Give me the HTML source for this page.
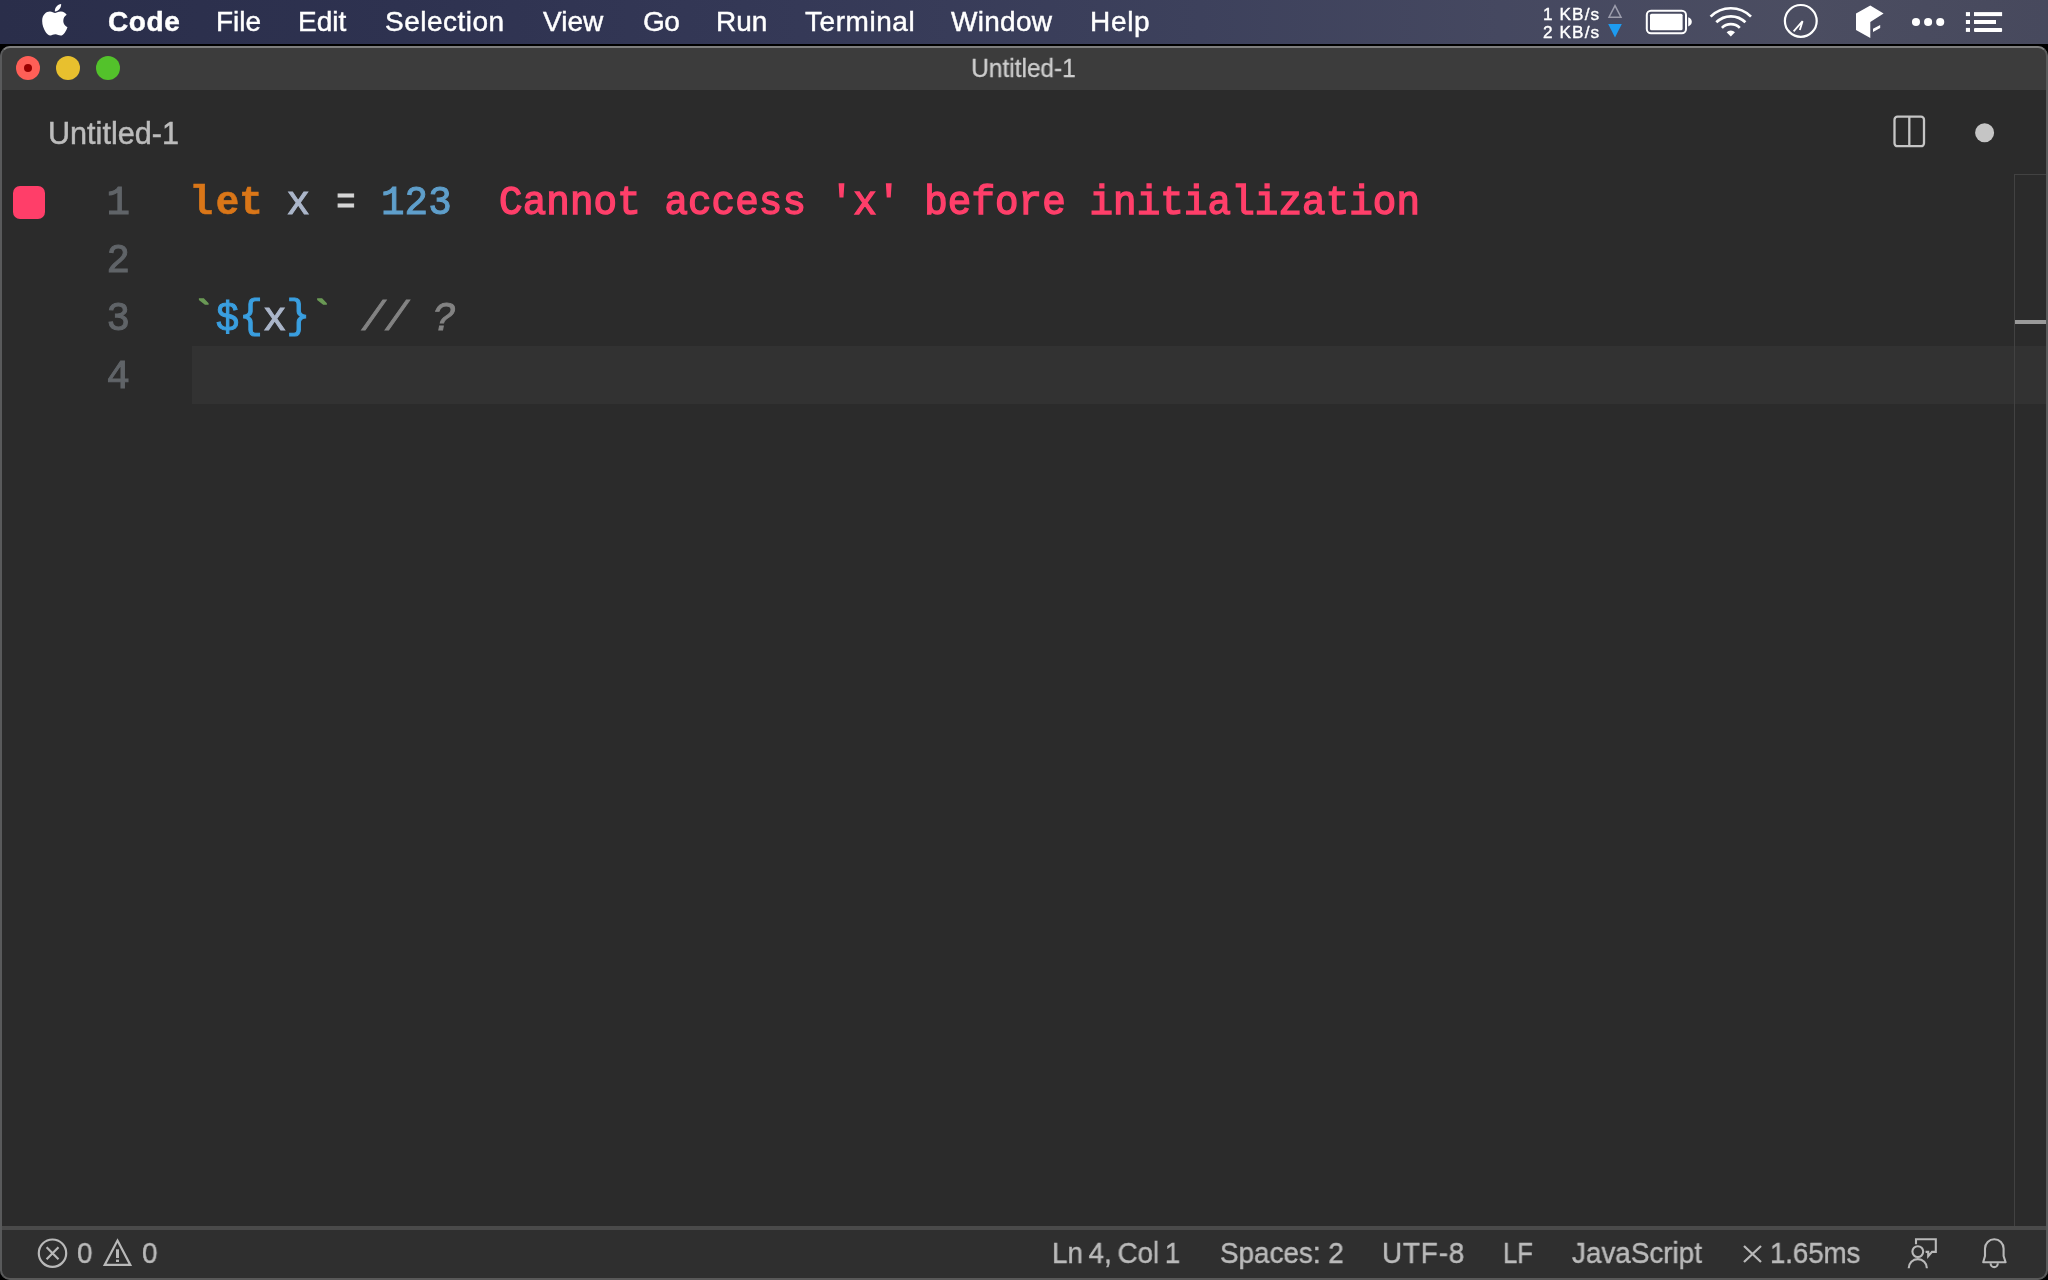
<!DOCTYPE html>
<html>
<head>
<meta charset="utf-8">
<title>Untitled-1</title>
<style>
*{margin:0;padding:0;box-sizing:border-box}
html,body{width:2048px;height:1280px;overflow:hidden;background:#000}
body{position:relative;font-family:"Liberation Sans",sans-serif;color:#fff}
.abs{position:absolute;white-space:pre;line-height:1}
.abs,.mi,.code,.st,#wtitle,.sm{will-change:transform}
/* menu bar */
#menubar{position:absolute;left:0;top:0;width:2048px;height:44px;
 background:linear-gradient(90deg,#2a2e4a 0px,#2e3250 400px,#353957 800px,#3d415c 1200px,#454860 1500px,#4b4d61 1800px,#47495d 2048px)}
#menubar .mi{position:absolute;top:6px;font-size:28px;line-height:32px;color:#fff;white-space:pre;-webkit-text-stroke:0.45px}
#menubar .sm{position:absolute;font-size:17.2px;line-height:18px;color:#fff;white-space:pre;letter-spacing:1.1px;-webkit-text-stroke:0.4px}
#blackline{position:absolute;left:0;top:44px;width:2048px;height:2px;background:#000}
/* window */
#win{position:absolute;left:0;top:46px;width:2048px;height:1234px;background:#2b2b2b;border-radius:10px;overflow:hidden}
#titlebar{position:absolute;left:0;top:0;width:100%;height:44px;background:#3c3c3c}
#frame{position:absolute;left:0;top:46px;width:2048px;height:1234px;border:2px solid #595a5b;border-top-color:#7e7e7e;border-bottom-color:#595959;border-radius:10px;box-shadow:0 0 0 20px #000;clip-path:inset(0);pointer-events:none}
#wtitle{position:absolute;left:0;width:2047px;top:52.5px;text-align:center;font-size:25px;line-height:30px;color:#cdcdcd;-webkit-text-stroke:0.3px;transform:scaleX(0.978);transform-origin:1023.5px 0}
.tl{position:absolute;top:56px;width:24px;height:24px;border-radius:50%}
/* tab */
#tabname{left:48px;top:116px;font-size:30.6px;line-height:34px;color:#bcbcbc;-webkit-text-stroke:0.5px}
/* editor */
.code{position:absolute;white-space:pre;font-family:"Liberation Mono",monospace;font-size:39.2px;line-height:58px;height:58px;transform:scaleY(1.05);transform-origin:0 39.4px;-webkit-text-stroke:1.0px;letter-spacing:0.1px}
.ln{color:#606468;width:60px;text-align:right;left:69.5px}
#curline{position:absolute;left:192px;top:346px;width:1856px;height:58px;background:#323232}
#bp{position:absolute;left:13px;top:186px;width:32px;height:33px;border-radius:7px;background:#ff3e69}
/* scrollbar */
#sb{position:absolute;left:2014px;top:174px;width:34px;height:1054px;border-left:1px solid #424242;border-top:1px solid #424242}
#sbmark{position:absolute;left:2015px;top:320px;width:33px;height:4px;background:#9a9a9a}
/* status bar */
#statline{position:absolute;left:0;top:1226px;width:2048px;height:4px;background:#4a4a4a}
#status{position:absolute;left:0;top:1230px;width:2048px;height:50px;background:#2f2f2f}
.st{position:absolute;top:1236px;font-size:29.3px;line-height:34px;color:#bababa;white-space:pre;transform:scaleX(0.95);transform-origin:0 0;-webkit-text-stroke:0.45px}
</style>
</head>
<body>
<div id="menubar">
 <span class="mi" style="left:107.8px;font-weight:bold;letter-spacing:0.6px">Code</span>
 <span class="mi" style="left:216px">File</span>
 <span class="mi" style="left:297.5px">Edit</span>
 <span class="mi" style="left:385px;letter-spacing:0.5px">Selection</span>
 <span class="mi" style="left:543px">View</span>
 <span class="mi" style="left:642.5px;letter-spacing:-0.5px">Go</span>
 <span class="mi" style="left:716px">Run</span>
 <span class="mi" style="left:805px;letter-spacing:0.55px">Terminal</span>
 <span class="mi" style="left:951px;letter-spacing:0.3px">Window</span>
 <span class="mi" style="left:1090px;letter-spacing:0.7px">Help</span>
 <span class="sm" style="left:1543.4px;top:4.5px">1 KB/s</span>
 <span class="sm" style="left:1543px;top:22.6px">2 KB/s</span>
</div>
<div id="blackline"></div>
<div id="win">
 <div id="titlebar"></div>
</div>
<div class="tl" style="left:16px;background:#ff5f57"></div>
<div class="tl" style="left:56px;background:#e8c02e"></div>
<div class="tl" style="left:96px;background:#53c22b"></div>
<div style="position:absolute;left:24px;top:64px;width:8px;height:8px;border-radius:50%;background:#990000"></div>
<div id="wtitle">Untitled-1</div>
<span class="abs" id="tabname">Untitled-1</span>

<div id="curline"></div>
<div id="bp"></div>
<span class="code ln" style="top:175px">1</span>
<span class="code ln" style="top:233px">2</span>
<span class="code ln" style="top:291px">3</span>
<span class="code ln" style="top:349px">4</span>
<span class="code" style="left:192px;top:175px"><b style="color:#d97618;-webkit-text-stroke:0.6px"><span style="position:relative;left:-2.5px">l</span>et</b><span style="color:#abb6ca"> x </span><span style="color:#d6d6d6;display:inline-block;transform:scaleX(0.82)">=</span> <span style="color:#5f9fcb">123</span>  <span style="color:#ff3f6a;-webkit-text-stroke:1.4px">Cannot access 'x' before initialization</span></span>
<span class="code" style="left:192px;top:291px"><span style="color:#6a9955;position:relative;top:-2px;-webkit-text-stroke:1.6px">`</span><span style="color:#3a9fe0">$<span style="position:relative;top:-2px">{</span></span><span style="color:#abb6ca">x</span><span style="color:#3a9fe0;position:relative;top:-2px">}</span><span style="color:#6a9955;position:relative;top:-2px;-webkit-text-stroke:1.6px">`</span> <i style="color:#838383;position:relative;left:4px">// ?</i></span>

<div id="sb"></div>
<div id="sbmark"></div>

<div id="statline"></div>
<div id="status"></div>
<span class="st" style="left:77px">0</span>
<span class="st" style="left:142px">0</span>
<span class="st" style="left:1052px;word-spacing:-2.2px">Ln 4, Col 1</span>
<span class="st" style="left:1220px">Spaces: 2</span>
<span class="st" style="left:1381.5px;letter-spacing:0.9px">UTF-8</span>
<span class="st" style="left:1502.5px;transform:scaleX(0.875)">LF</span>
<span class="st" style="left:1572px">JavaScript</span>
<span class="st" style="left:1770px;letter-spacing:-0.2px">1.65ms</span>

<svg id="icons" width="2048" height="1280" viewBox="0 0 2048 1280" style="position:absolute;left:0;top:0;pointer-events:none">
 <!-- apple logo -->
 <g transform="translate(41.9,1.7) scale(0.0672,0.0706)" fill="#fff">
  <path d="M318.7 268.7c-.2-36.700 16.400-64.400 50-84.800-18.800-26.900-47.200-41.700-84.700-44.600-35.500-2.800-74.300 20.700-88.500 20.700-15 0-49.400-19.700-76.400-19.700C63.300 141.200 4 184.800 4 273.500q0 39.300 14.400 81.200c12.800 36.700 59 126.700 107.200 125.200 25.200-.6 43-17.900 75.800-17.900 31.800 0 48.300 17.900 76.400 17.900 48.600-.7 90.400-82.500 102.600-119.300-65.200-30.700-61.700-90-61.700-91.900zm-56.600-164.200c27.300-32.400 24.800-61.900 24-72.500-24.100 1.400-52 16.400-67.900 34.900-17.500 19.800-27.800 44.300-25.600 71.900 26.100 2 49.900-11.400 69.500-34.300z"/>
 </g>
 <!-- network arrows -->
 <path d="M1615 5.6 L1621 17.2 L1609 17.2 Z" fill="none" stroke="#9c9dac" stroke-width="1.5" stroke-linejoin="miter"/>
 <path d="M1608.2 23.9 L1621.8 23.9 L1615 37.4 Z" fill="#1d9bf0"/>
 <!-- battery -->
 <rect x="1646.8" y="10.8" width="39.2" height="22.4" rx="4.2" ry="4.2" fill="none" stroke="#fff" stroke-width="2"/>
 <rect x="1650" y="13.7" width="32.6" height="16.6" rx="1.6" fill="#fff"/>
 <path d="M1688.2 17.2 C1690.6 18 1691.8 19.8 1691.8 21.8 C1691.8 23.8 1690.6 25.6 1688.2 26.4 Z" fill="#fff"/>
 <!-- wifi -->
 <g fill="none" stroke="#fff" stroke-width="2.7" stroke-linecap="butt">
  <path d="M1710.6 16.6 A28.6 28.6 0 0 1 1751.0 16.6"/>
  <path d="M1716.3 22.3 A20.6 20.6 0 0 1 1745.4 22.3"/>
  <path d="M1721.9 27.9 A12.7 12.7 0 0 1 1739.8 27.9"/>
 </g>
 <path d="M1730.8 36.4 L1726.6 32.2 A6 6 0 0 1 1735.0 32.2 Z" fill="#fff"/>
 <!-- clock -->
 <circle cx="1800.8" cy="20.9" r="15.9" fill="none" stroke="#fff" stroke-width="2.2"/>
 <path d="M1793.6 31.4 L1802.6 21.2 L1799.8 30.0" fill="none" stroke="#fff" stroke-width="1.8" stroke-linejoin="miter"/>
 <!-- box -->
 <path d="M1856 13.6 L1870.3 5.6 L1883.6 13.6 L1870.3 22 L1870.3 38 L1856 29.9 Z" fill="#fff"/>
 <path d="M1873 28.7 L1880.2 25 L1880.2 28.1 L1873 31.9 Z" fill="#fff"/>
 <!-- dots -->
 <circle cx="1916" cy="22" r="4.05" fill="#fff"/><circle cx="1928.1" cy="22" r="4.05" fill="#fff"/><circle cx="1940.2" cy="22" r="4.05" fill="#fff"/>
 <!-- list -->
 <g fill="#fff">
  <rect x="1965.9" y="12.1" width="4.1" height="4"/><rect x="1974" y="12.1" width="28.1" height="4"/>
  <rect x="1965.9" y="20" width="4.1" height="4"/><rect x="1974" y="20" width="22" height="4"/>
  <rect x="1965.9" y="27.9" width="4.1" height="4"/><rect x="1974" y="27.9" width="28.1" height="4" rx="1"/>
 </g>
 <!-- split editor -->
 <g fill="none" stroke="#c5c5c5" stroke-width="2.3">
  <rect x="1894.5" y="116.7" width="29.5" height="29.5" rx="3"/>
  <path d="M1909.3 116.7 V146.2"/>
 </g>
 <circle cx="1984.6" cy="132.7" r="9.5" fill="#c5c5c5"/>
 <!-- status: error / warning -->
 <g fill="none" stroke="#b9b9b9" stroke-width="2.2">
  <circle cx="52.5" cy="1253.2" r="13.7"/>
  <path d="M46.6 1247.3 L58.5 1259.2 M58.5 1247.3 L46.6 1259.2"/>
  <path d="M117.5 1240.6 L130.3 1264.9 L104.7 1264.9 Z" stroke-linejoin="miter"/>
 </g>
 <rect x="116" y="1249.3" width="3" height="8.7" fill="#b9b9b9"/><rect x="116" y="1259.6" width="3" height="2.4" fill="#b9b9b9"/>
 <!-- status: x -->
 <path d="M1744 1246 L1761 1262 M1761 1246 L1744 1262" fill="none" stroke="#b9b9b9" stroke-width="2.3"/>
 <!-- feedback -->
 <g fill="none" stroke="#b9b9b9" stroke-width="2.1">
  <path d="M1916 1244.2 V1239.3 H1935.8 V1251.9 H1932 L1928.2 1256.2 V1251.9 H1925.6"/>
  <circle cx="1917.8" cy="1251.6" r="5.4"/>
  <path d="M1908.7 1268.2 A9.1 9.1 0 0 1 1926.9 1268.2"/>
 </g>
 <!-- bell -->
 <g fill="none" stroke="#b9b9b9" stroke-width="2.1" stroke-linejoin="round">
  <path d="M1983.2 1262.2 L1985 1256 L1985 1248.5 A9.3 9.3 0 0 1 2003.6 1248.5 L2003.6 1256 L2005.6 1262.2 Z"/>
  <path d="M1990.6 1263.2 A3.6 3.9 0 0 0 1997.8 1263.2"/>
 </g>
</svg>
<div id="frame"></div>
</body>
</html>
